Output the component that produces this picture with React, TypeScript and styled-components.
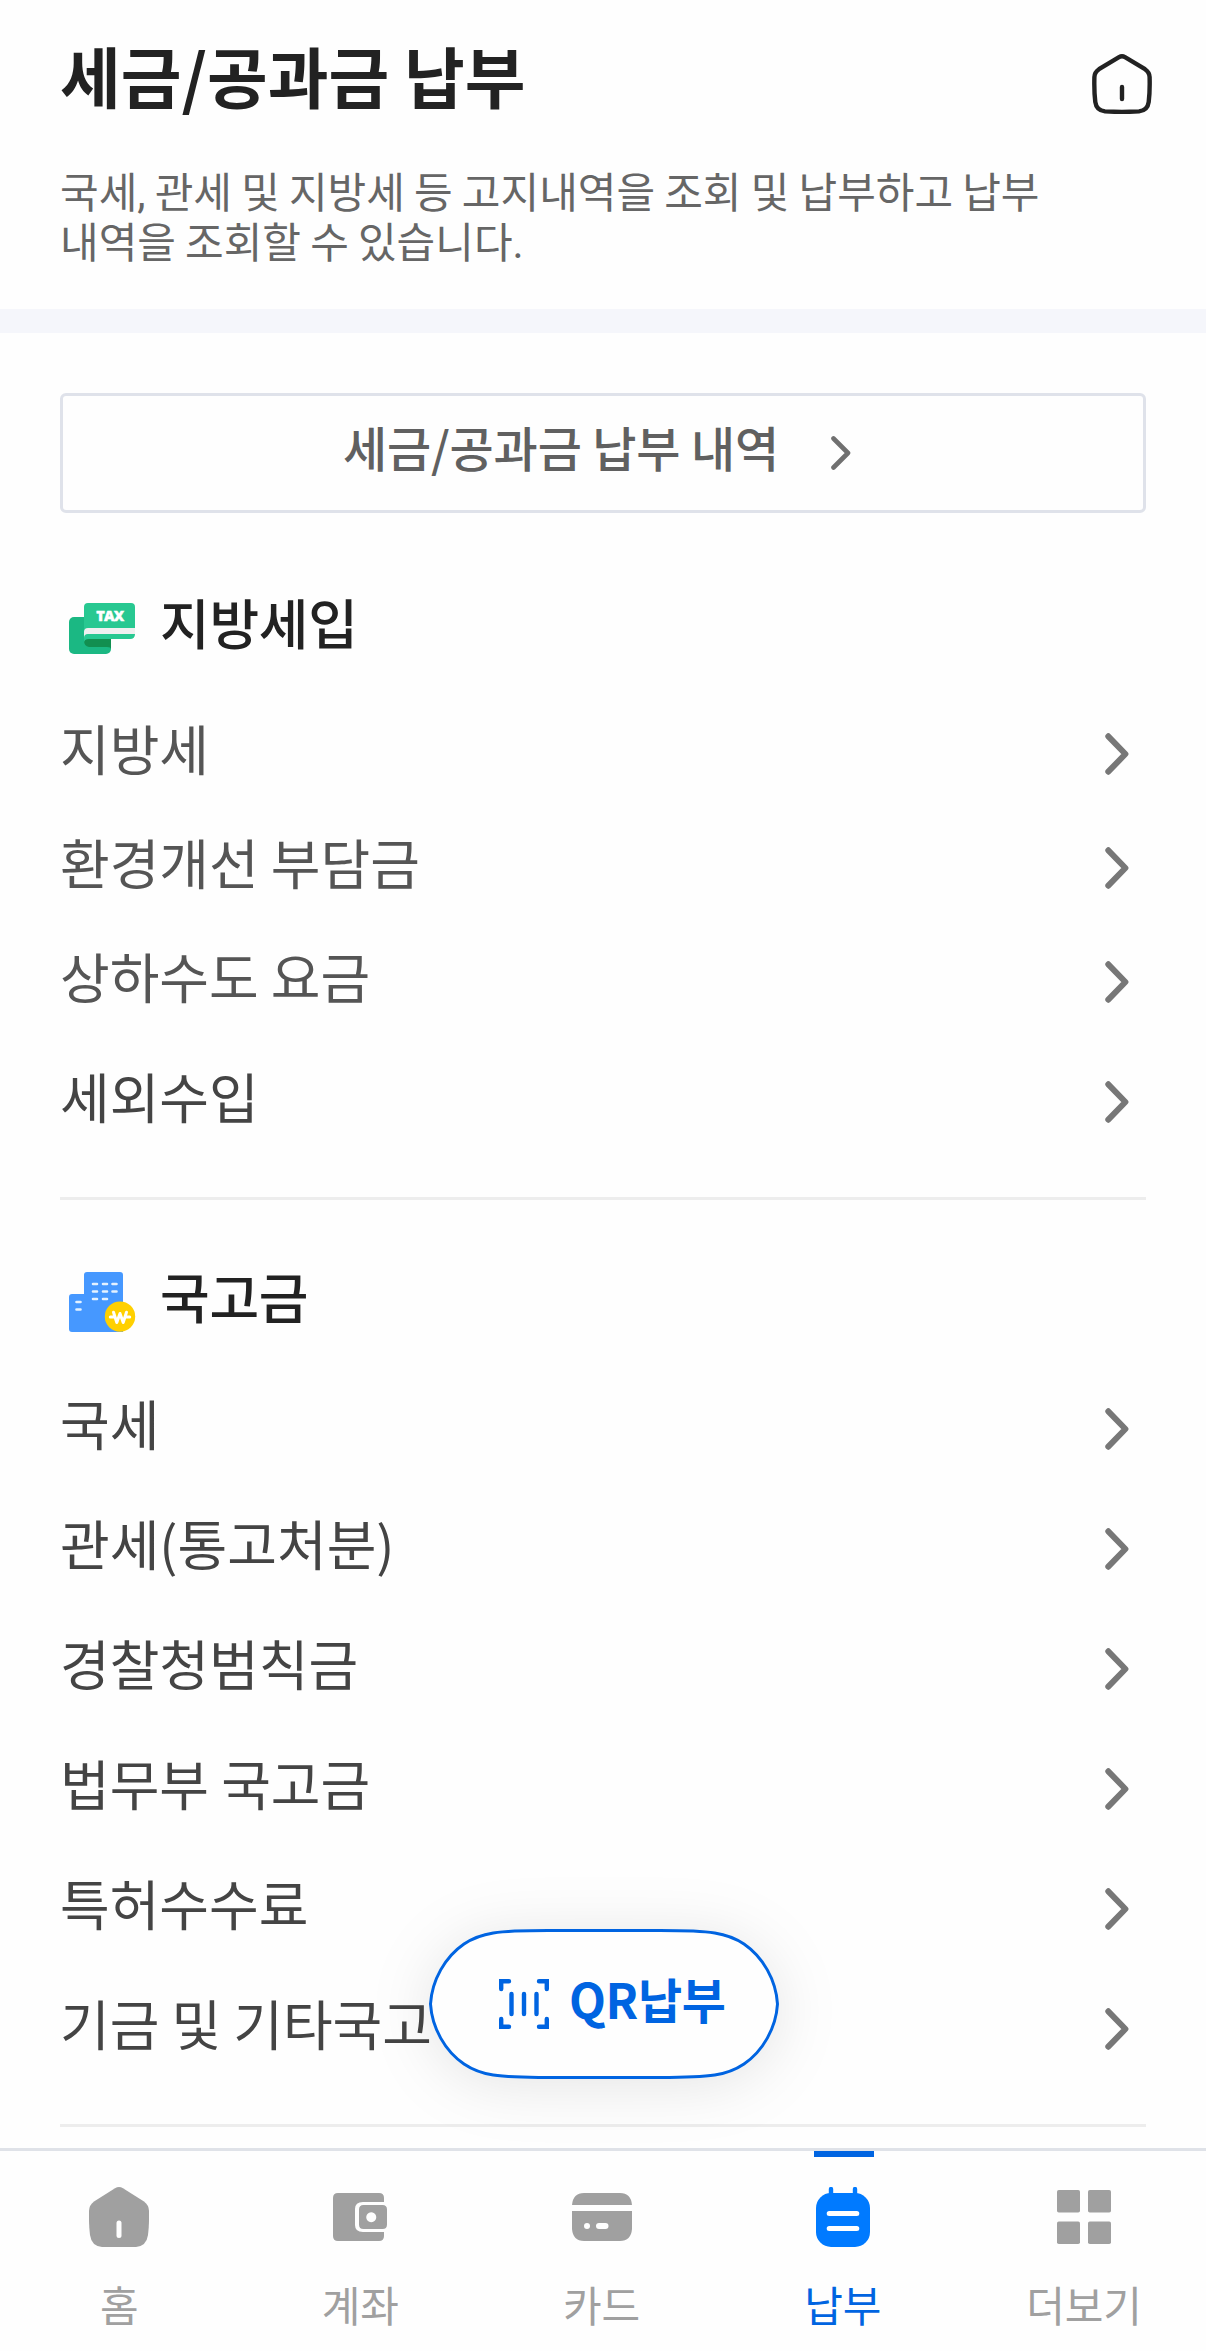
import React from "react";
import styled, { createGlobalStyle } from "styled-components";

const GlobalStyle = createGlobalStyle`
  * { box-sizing: border-box; }
  body {
    margin: 0;
    background: #fefefe;
    font-family: "Noto Sans CJK KR", "Noto Sans", sans-serif;
  }
  button { font-family: inherit; border: 0; padding: 0; background: none; }
`;

const Screen = styled.div`
  position: relative;
  display: flex;
  flex-direction: column;
  width: 1206px;
  height: 2351px;
  overflow: hidden;
  background: #fefefe;
`;

const Header = styled.header`
  flex: none;
  height: 333px;
  padding: 26px 54px 0 60px;
  border-bottom: 24px solid #f5f6fb;
`;

const TitleRow = styled.div`
  display: flex;
  justify-content: space-between;
  height: 96px;
`;

const Title = styled.h1`
  margin: 0;
  font-size: 66px;
  line-height: 96px;
  font-weight: 700;
  color: #222;
`;

const HomeButton = styled.button`
  height: 60px;
  margin-top: 28px;
`;

const Description = styled.p`
  width: 1000px;
  margin: 47px 0 0;
  font-family: Roboto, "Noto Sans CJK KR", sans-serif;
  font-size: 42px;
  line-height: 50px;
  word-spacing: -1.25px;
  color: #666;
  word-break: keep-all;
`;

const Main = styled.main`
  flex: 1;
  min-height: 0;
  overflow: hidden;
  padding: 60px 60px 0;
`;

const HistoryButton = styled.button`
  display: flex;
  align-items: center;
  justify-content: center;
  gap: 52px;
  width: 100%;
  height: 120px;
  padding-right: 12px;
  border: 3px solid #dfe2ea;
  border-radius: 6px;
  font-size: 48px;
  font-weight: 500;
  letter-spacing: -0.15px;
  color: #606060;
`;

const Raised = styled.span<{ $by: number }>`
  line-height: 70px;
  padding-bottom: ${(p) => p.$by * 2}px;
`;

const Section = styled.section<{ $top: number; $headGap: number }>`
  padding-top: ${(p) => p.$top}px;
  padding-bottom: 53px;
  border-bottom: 3px solid #ededed;
  h2 { margin-bottom: ${(p) => p.$headGap}px; }
`;

const SectionTitle = styled.h2`
  display: flex;
  align-items: center;
  gap: 23px;
  height: 84px;
  margin: 0;
  padding-left: 9px;
  font-size: 54px;
  font-weight: 500;
  letter-spacing: -0.3px;
  color: #222;
`;

const Row = styled.div<{ $gap: number; $tone: string }>`
  display: flex;
  align-items: center;
  justify-content: space-between;
  height: 84px;
  margin-top: ${(p) => p.$gap}px;
  padding-right: 17px;
  font-size: 54px;
  color: ${(p) => p.$tone};
`;

const QrButton = styled.button`
  position: absolute;
  left: 428.5px;
  top: 1929px;
  display: flex;
  align-items: center;
  width: 350px;
  height: 150px;
  padding-left: 70px;
  font-size: 48px;
  font-weight: 700;
  letter-spacing: -0.4px;
  color: #0064e1;
`;

const QrShape = styled.svg`
  position: absolute;
  inset: 0;
  overflow: visible;
  filter: drop-shadow(0 6px 30px rgba(0, 0, 0, 0.1));
`;

const QrContent = styled.span`
  position: relative;
  display: flex;
  align-items: center;
  gap: 20.5px;
`;

const TabBar = styled.nav`
  flex: none;
  display: flex;
  height: 203px;
  border-top: 3px solid #dfe2e8;
  background: #fefefe;
`;

const Tab = styled.div<{ $active?: boolean }>`
  position: relative;
  flex: 1;
  display: flex;
  flex-direction: column;
  align-items: center;
  padding: 36px 3px 0 0;
  font-size: 42px;
  letter-spacing: -0.2px;
  line-height: 60px;
  color: ${(p) => (p.$active ? "#0064e1" : "#a0a0a0")};
  svg { margin-bottom: 27px; }
  &::before {
    content: "";
    position: absolute;
    top: 0;
    left: calc(50% - 30px);
    width: 60px;
    height: 6px;
    background: ${(p) => (p.$active ? "#0064e1" : "transparent")};
  }
`;

const Chevron = () => (
  <svg width="24" height="42" viewBox="0 0 24 42" fill="none" stroke="#777" strokeWidth="6" strokeLinecap="round" strokeLinejoin="round">
    <path d="M3.3 3.300 20.400 21 3.300 38.700" />
  </svg>
);

const SmallChevron = () => (
  <svg width="20" height="34" viewBox="0 0 20 34" fill="none" stroke="#707070" strokeWidth="4.600" strokeLinecap="round" strokeLinejoin="round">
    <path d="M2.500 2.500 17 17 2.500 31.500" />
  </svg>
);

const HomeOutline = () => (
  <svg width="60" height="60" viewBox="0 0 60 60" fill="none" stroke="#222" strokeWidth="4.4" strokeLinecap="round">
    <path d="M27 3.1Q30 1.5 33 3.1L53 15.2Q57.4 18.2 57.6 23Q58 38 56.7 48Q55.6 56.4 47 57.4Q30 58.4 13 57.4Q4.4 56.4 3.3 48Q2 38 2.4 23Q2.6 18.2 7 15.2Z" />
    <path d="M30 33V45" />
  </svg>
);

const TaxIcon = () => (
  <svg width="68" height="66" viewBox="0 0 68 66">
    <rect x="0" y="22" width="42" height="37" rx="5" fill="#1bb883" />
    <path d="M15 42H42V54Q42 52 38 52H20Q15 51 15 46Z" fill="#128f50" />
    <path d="M19 8H62Q66 8 66 12V39Q66 44 61 44H20Q15 44 15 48V12Q15 8 19 8Z" fill="#28c891" />
    <path d="M19 33H66V39H19Q15 39 15 43V37Q15 33 19 33Z" fill="#f0f0f0" />
    <text x="41.2" y="26.4" textAnchor="middle" fontSize="14.500" fontWeight="800" fontFamily="Open Sans, sans-serif" letterSpacing="0" fill="#fff" stroke="#fff" strokeWidth="0.400" textLength="28">TAX</text>
  </svg>
);

const BuildingIcon = () => (
  <svg width="68" height="60" viewBox="0 0 68 60">
    <path d="M3 22H15V3Q15 0 18 0H51Q54 0 54 3V60H3Q0 60 0 57V25Q0 22 3 22Z" fill="#4698ff" />
    <path d="M24 12H28M34 12H38M43.500 12H47.500M24 19.500H28M34 19.500H38M43.500 19.500H47.500M24 27H28M34 27H38M7.500 30H11.500M7.500 37.500H11.500" stroke="#e4f1ff" strokeWidth="2.600" strokeLinecap="round" />
    <circle cx="51" cy="44.600" r="15.200" fill="#ffd000" />
    <path d="M44.500 40.300 47.800 50.500 51 41.500 54.200 50.500 57.500 40.300M41.300 45H45M57 45H60.700" fill="none" stroke="#fff" strokeWidth="3" strokeLinecap="round" strokeLinejoin="round" />
  </svg>
);

const QrIcon = () => (
  <svg width="50" height="50" viewBox="0 0 50 50" fill="none" stroke="#0064e1" strokeWidth="4.400" strokeLinecap="round">
    <path d="M2.200 10V2.200H10M40 2.200H47.800V10M47.800 40V47.800H40M10 47.800H2.200V40M12.500 15V35M25 15V35M37.500 15V35" />
  </svg>
);

const GREY = "#a0a0a0";

const HomeTab = () => (
  <svg width="60" height="60" viewBox="0 0 60 60">
    <path d="M26 1.200Q30-1 34 1.200L55 14.500Q59.800 18 60 24Q60.300 38 59 48Q57.500 59 47 60Q30 60.500 13 60Q2.500 59 1 48Q-.3 38 0 24Q.2 18 5 14.500Z" fill={GREY} />
    <path d="M30 36V48.500" stroke="#fefefe" strokeWidth="5" strokeLinecap="round" />
  </svg>
);

const WalletTab = () => (
  <svg width="54" height="60" viewBox="0 0 54 60">
    <path d="M5 6H46Q51 6 51 11V15H30Q22 15 22 22V38Q22 45 30 45H51V49Q51 54 46 54H5Q0 54 0 49V11Q0 6 5 6Z" fill={GREY} />
    <path fillRule="evenodd" d="M30.500 18H49.500Q54 18 54 22.500V37.500Q54 42 49.500 42H30.500Q26 42 26 37.500V22.500Q26 18 30.500 18ZM38.200 25.200A5 5 0 1 0 38.300 25.200Z" fill={GREY} />
  </svg>
);

const CardTab = () => (
  <svg width="60" height="60" viewBox="0 0 60 60">
    <path d="M0 18Q1 6 12 6H48Q59 6 60 18ZM0 24H60V42Q59 54 48 54H12Q1 54 0 42Z" fill={GREY} />
    <path d="M15 39H15.010M27 39H33.500" stroke="#fefefe" strokeWidth="6" strokeLinecap="round" />
  </svg>
);

const PayTab = () => (
  <svg width="54" height="60" viewBox="0 0 54 60">
    <rect x="0" y="6" width="54" height="54" rx="15" fill="#007aff" />
    <path d="M15 2V9M39 2V9" stroke="#007aff" strokeWidth="4.400" strokeLinecap="round" />
    <path d="M13.200 26.500H40.800M13.200 41.500H40.800" stroke="#fefefe" strokeWidth="5" strokeLinecap="round" />
  </svg>
);

const MoreTab = () => (
  <svg width="54" height="60" viewBox="0 0 54 60" fill={GREY}>
    <rect x="0" y="3" width="23" height="22.600" rx="1.800" />
    <rect x="31" y="3" width="23" height="22.600" rx="1.800" />
    <rect x="0" y="34.400" width="23" height="22.600" rx="1.800" />
    <rect x="31" y="34.400" width="23" height="22.600" rx="1.800" />
  </svg>
);

type Item = { name: string; gap: number; tone: string };

const localItems: Item[] = [
  { name: "지방세", gap: 0, tone: "#555" },
  { name: "환경개선 부담금", gap: 30, tone: "#555" },
  { name: "상하수도 요금", gap: 30, tone: "#555" },
  { name: "세외수입", gap: 36, tone: "#444" },
];

const treasuryItems: Item[] = [
  "국세",
  "관세(통고처분)",
  "경찰청범칙금",
  "법무부 국고금",
  "특허수수료",
  "기금 및 기타국고",
].map((name, i) => ({ name, gap: i ? 36 : 0, tone: "#444" }));

const tabs = [
  { label: "홈", Icon: HomeTab },
  { label: "계좌", Icon: WalletTab },
  { label: "카드", Icon: CardTab },
  { label: "납부", Icon: PayTab, active: true },
  { label: "더보기", Icon: MoreTab },
];

const ItemList = ({ items }: { items: Item[] }) => (
  <>
    {items.map((item) => (
      <Row key={item.name} $gap={item.gap} $tone={item.tone}>
        <Raised $by={6.5}>{item.name}</Raised>
        <Chevron />
      </Row>
    ))}
  </>
);

export default function App() {
  return (
    <Screen>
      <GlobalStyle />
      <Header>
        <TitleRow>
          <Title>세금/공과금 납부</Title>
          <HomeButton aria-label="홈">
            <HomeOutline />
          </HomeButton>
        </TitleRow>
        <Description>국세, 관세 및 지방세 등 고지내역을 조회 및 납부하고 납부 내역을 조회할 수 있습니다.</Description>
      </Header>
      <Main>
        <HistoryButton>
          <Raised $by={7}>세금/공과금 납부 내역</Raised>
          <SmallChevron />
        </HistoryButton>
        <Section $top={73} $headGap={42}>
          <SectionTitle>
            <TaxIcon />
            <Raised $by={6}>지방세입</Raised>
          </SectionTitle>
          <ItemList items={localItems} />
        </Section>
        <Section $top={60} $headGap={43}>
          <SectionTitle>
            <BuildingIcon />
            <Raised $by={6}>국고금</Raised>
          </SectionTitle>
          <ItemList items={treasuryItems} />
        </Section>
      </Main>
      <TabBar>
        {tabs.map(({ label, Icon, active }) => (
          <Tab key={label} $active={active}>
            <Icon />
            {label}
          </Tab>
        ))}
      </TabBar>
      <QrButton>
        <QrShape width="350" height="150" viewBox="0 0 350 150">
          <path
            d="M1.500 75C3 51 16 28 35 15C52 3.500 68 1.500 119 1.500H231C282 1.500 298 3.500 315 15C334 28 347 51 348.500 75C347 99 334 122 315 135C298 146.500 282 148.500 231 148.500H119C68 148.500 52 146.500 35 135C16 122 3 99 1.500 75Z"
            fill="#fefefe"
            stroke="#0064e1"
            strokeWidth="3"
          />
        </QrShape>
        <QrContent>
          <QrIcon />
          <Raised $by={6.5}>QR납부</Raised>
        </QrContent>
      </QrButton>
    </Screen>
  );
}
